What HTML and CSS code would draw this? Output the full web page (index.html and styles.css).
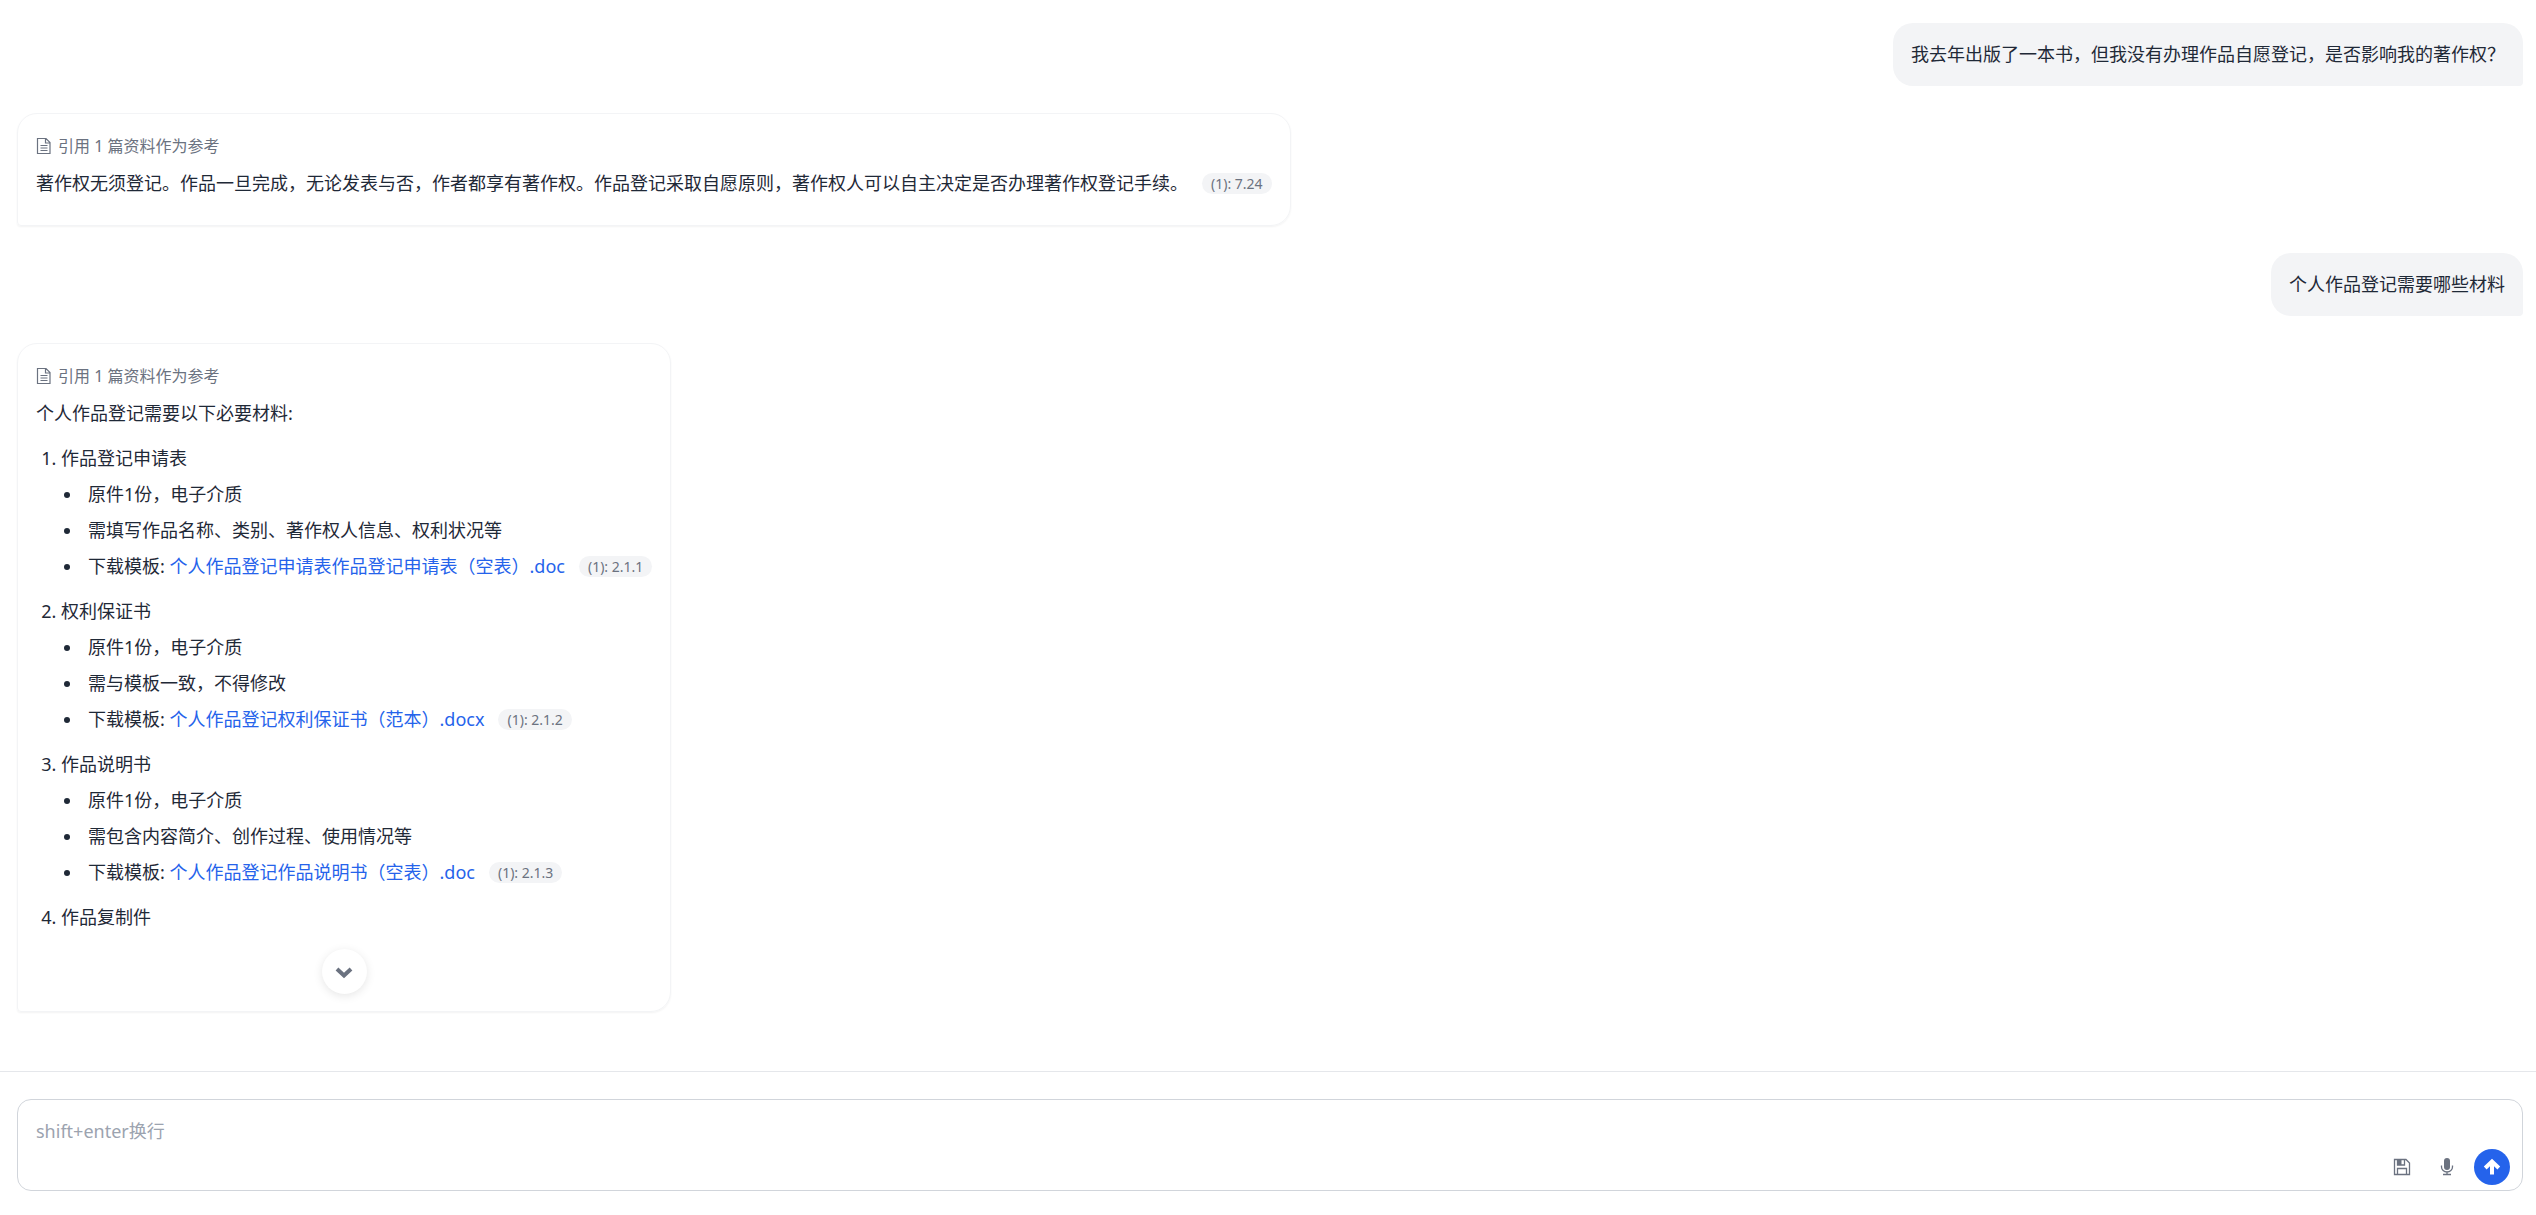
FILE: index.html
```html
<!DOCTYPE html>
<html lang="zh-CN">
<head>
  <meta charset="UTF-8">
  <meta name="viewport" content="width=device-width, initial-scale=1.0">
  <title>Chat</title>
  <link rel="stylesheet" href="styles.css">
</head>
<body>

<!-- Messages -->
<main class="messages">
  <div class="question">我去年出版了一本书，但我没有办理作品自愿登记，是否影响我的著作权？</div>

  <div class="answer">
    <div class="refs">
      <svg class="refs-icon" viewBox="0 0 16 18" width="16" height="18">
        <path d="M1.5 1.5h8.5l4 4v11h-12.500z M9.500 1.5v4.500h4.5 M4.5 8.500h7 M4.5 11h7 M4.5 13.5h7"/>
      </svg>
      <span>引用 1 篇资料作为参考</span>
    </div>
    <div class="content">
      <p>著作权无须登记。作品一旦完成，无论发表与否，作者都享有著作权。作品登记采取自愿原则，著作权人可以自主决定是否办理著作权登记手续。<span class="cite">(1): 7.24</span></p>
    </div>
  </div>

  <div class="question">个人作品登记需要哪些材料</div>

  <div class="answer">
    <div class="refs">
      <svg class="refs-icon" viewBox="0 0 16 18" width="16" height="18">
        <path d="M1.5 1.5h8.5l4 4v11h-12.500z M9.500 1.5v4.500h4.5 M4.5 8.500h7 M4.5 11h7 M4.5 13.5h7"/>
      </svg>
      <span>引用 1 篇资料作为参考</span>
    </div>
    <div class="content">
      <p>个人作品登记需要以下必要材料:</p>
      <ol>
        <li>作品登记申请表
          <ul>
            <li>原件1份，电子介质</li>
            <li>需填写作品名称、类别、著作权人信息、权利状况等</li>
            <li>下载模板: <a href="#">个人作品登记申请表作品登记申请表（空表）.doc</a><span class="cite">(1): 2.1.1</span></li>
          </ul>
        </li>
        <li>权利保证书
          <ul>
            <li>原件1份，电子介质</li>
            <li>需与模板一致，不得修改</li>
            <li>下载模板: <a href="#">个人作品登记权利保证书（范本）.docx</a><span class="cite">(1): 2.1.2</span></li>
          </ul>
        </li>
        <li>作品说明书
          <ul>
            <li>原件1份，电子介质</li>
            <li>需包含内容简介、创作过程、使用情况等</li>
            <li>下载模板: <a href="#">个人作品登记作品说明书（空表）.doc</a><span class="cite">(1): 2.1.3</span></li>
          </ul>
        </li>
        <li>作品复制件</li>
      </ol>
    </div>
    <button class="expand" type="button" aria-label="展开">
      <svg viewBox="0 0 18 18" width="18" height="18"><path d="M2 6l7 6.500 7-6.500"/></svg>
    </button>
  </div>
</main>

<!-- Input -->
<footer class="footer">
  <form class="input-box">
    <textarea class="input" rows="1" placeholder="shift+enter换行" aria-label="输入"></textarea>
    <div class="tools">
      <button class="tool" type="button" aria-label="保存">
        <svg viewBox="0 0 18 18" width="18" height="18">
          <path class="line" d="M1.500 1.500h11.500l3.500 3.500v11.500h-15z M4.500 16.500v-6h9v6 M4.500 1.500v5.500h7v-5.500"/>
          <path class="solid" d="M4.500 1.500h4v5.500h-4z"/>
        </svg>
      </button>
      <button class="tool" type="button" aria-label="语音">
        <svg viewBox="0 0 18 18" width="18" height="18">
          <rect class="solid" x="6" y="0" width="6" height="12" rx="3"/>
          <path class="line" d="M3.500 7.500v1.500a5.500 5 0 0 0 11 0v-1.500 M9 14v2.500 M5 16.500h8"/>
        </svg>
      </button>
      <button class="send" type="submit" aria-label="发送">
        <svg viewBox="0 0 18 18" width="18" height="18"><path d="M9 16.500v-13 M2.200 10l6.800-6.500 6.800 6.500"/></svg>
      </button>
    </div>
  </form>
</footer>

</body>
</html>
```
FILE: styles.css
```css
* {
  box-sizing: border-box;
}

body {
  display: flex;
  flex-direction: column;
  height: 100vh;
  margin: 0;
  background-color: #fff;
  color: #1f2937;
  font-family: "Noto Sans", "Noto Sans CJK SC", sans-serif;
  font-size: 18px;
  line-height: 36px;
}

p, ol, ul {
  margin: 0;
  padding: 0;
}

svg {
  display: block;
  fill: none;
}

button {
  display: flex;
  justify-content: center;
  align-items: center;
  padding: 0;
  border: none;
  border-radius: 50%;
  background: none;
  cursor: pointer;
}

/* Message list */
.messages {
  display: flex;
  flex: 1;
  flex-direction: column;
  align-items: flex-start;
  gap: 27px;
  min-height: 0;
  padding: 23px 13px 0 17px;
  overflow: hidden;
}

.question {
  flex-shrink: 0;
  align-self: flex-end;
  padding: 13px 18px 14px;
  border-radius: 20px 20px 4px 20px;
  background-color: #f3f4f6;
}

.answer {
  display: flex;
  flex-shrink: 0;
  flex-direction: column;
  max-width: 100%;
  padding: 13px 18px 17px;
  border: 1px solid #f3f4f6;
  border-radius: 20px 20px 20px 4px;
  box-shadow: 0 1px 2px rgba(0, 0, 0, 0.05);
}

.refs {
  display: flex;
  align-items: center;
  gap: 6px;
  color: #6b7280;
  font-size: 16px;
  line-height: 38px;
}

.refs-icon {
  stroke: #6b7280;
  stroke-width: 1.2;
}

.content {
  padding-bottom: 7px;
}

.content ol {
  padding-left: 25px;
}

.content ol > li {
  margin-top: 9px;
}

.content ul {
  padding-left: 22px;
  list-style: disc;
}

.content ul > li {
  padding-left: 5px;
}

.content a {
  color: #2563eb;
  text-decoration: none;
}

.cite {
  display: inline-block;
  margin-left: 14px;
  padding: 0 9px;
  border-radius: 11px;
  background-color: #f3f4f6;
  color: #6b7280;
  font-size: 14px;
  line-height: 21px;
  vertical-align: 1px;
}

.expand {
  align-self: center;
  width: 45px;
  height: 45px;
  margin-top: 7px;
  background-color: #fff;
  box-shadow: 0 2px 10px rgba(0, 0, 0, 0.1);
}

.expand svg {
  stroke: #6b7280;
  stroke-width: 4;
}

/* Input area */
.footer {
  padding: 27px 13px 24px 17px;
  border-top: 1px solid #e5e7eb;
}

.input-box {
  display: flex;
  flex-direction: column;
  padding: 13px 12px 5px 18px;
  border: 1px solid #d1d5db;
  border-radius: 14px;
}

.input {
  display: block;
  width: 100%;
  height: 36px;
  padding: 0;
  border: none;
  outline: none;
  background: none;
  color: inherit;
  font: inherit;
  resize: none;
}

.input::placeholder {
  color: #9ca3af;
}

.tools {
  display: flex;
  justify-content: flex-end;
  gap: 9px;
}

.tool,
.send {
  width: 36px;
  height: 36px;
}

.tool .line {
  stroke: #6b7280;
  stroke-width: 1.3;
}

.tool .solid {
  fill: #6b7280;
}

.send {
  background-color: #2563eb;
}

.send svg {
  stroke: #fff;
  stroke-width: 4;
}
```
